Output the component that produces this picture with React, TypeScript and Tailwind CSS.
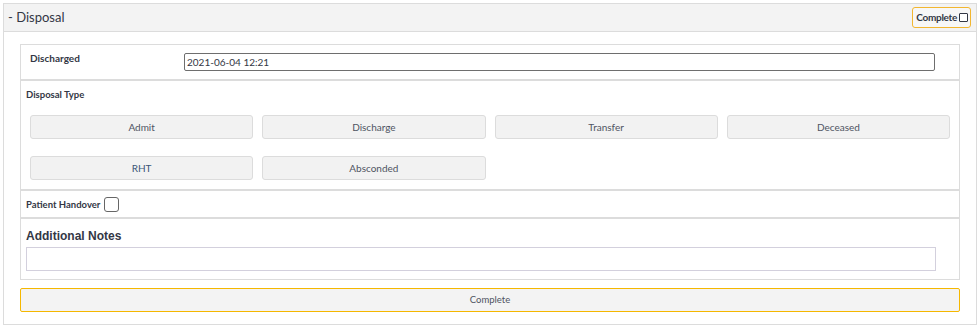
import { useState } from "react";

const font = { fontFamily: "Lato, 'Open Sans', sans-serif" };

const disposalTypes = ["Admit", "Discharge", "Transfer", "Deceased", "RHT", "Absconded"];

export default function App() {
  const [selected, setSelected] = useState<string | null>(null);
  const [handover, setHandover] = useState(false);
  const [done, setDone] = useState(false);

  return (
    <div className="w-[979px] h-[327px] bg-white pt-[3px] pl-[3px] pr-[2px]" style={font}>
      <div className="border border-[#dcdcdc] h-[322px] flex flex-col">
        {/* header */}
        <div className="h-[28px] bg-[#f3f3f3] border-b border-[#dcdcdc] flex items-center justify-between pl-[4px] pr-[5px]">
          <span className="text-[13px] text-[#333745]">- Disposal</span>
          <button
            onClick={() => setDone(!done)}
            className="h-[21px] pl-[3px] pr-[2px] flex items-center border border-[#f2b630] rounded-[3px] bg-[#f7f7f7] text-[10px] font-bold text-[#333745] tracking-[-0.3px]"
          >
            Complete
            <span className="w-[9px] h-[9px] border border-[#333745] rounded-[1px] ml-[2px] bg-white" />
          </button>
        </div>

        {/* body */}
        <div className="pt-[12px] pl-[16px] pr-[16px]">
          <div className="border border-[#dcdcdc]">
            <div className="h-[36px] flex items-start border-b-2 border-[#dcdcdc]">
              <span className="w-[163px] pl-[9px] pt-[6px] text-[10px] font-bold text-[#333745]">Discharged</span>
              <input
                defaultValue="2021-06-04 12:21"
                className="mt-[8px] w-[751px] h-[18px] border border-[#6e6e6e] rounded-[2px] px-[2px] text-[10px] text-[#333745] outline-none"
              />
            </div>

            <div className="border-b-2 border-[#dcdcdc] pl-[5px] pr-[9px] pt-[7px] pb-[9px]">
              <div className="text-[9.5px] font-bold text-[#333745]">Disposal Type</div>
              <div className="grid grid-cols-4 gap-x-[9px] gap-y-[17px] mt-[13px] pl-[4px]">
                {disposalTypes.map((t) => (
                  <button
                    key={t}
                    onClick={() => setSelected(t)}
                    className={`h-[24px] rounded-[3px] border border-[#dcdcdc] text-[10px] ${
                      selected === t ? "bg-[#e2e2e2]" : "bg-[#f2f2f2]"
                    } ${t === "RHT" ? "text-[#3b5577]" : "text-[#4f5462]"}`}
                  >
                    {t}
                  </button>
                ))}
              </div>
            </div>

            <div className="h-[28px] flex items-center gap-[4px] border-b-2 border-[#dcdcdc] pl-[5px] pt-[1px]">
              <span className="text-[9.5px] font-bold text-[#333745]">Patient Handover</span>
              <button
                onClick={() => setHandover(!handover)}
                className="w-[15px] h-[15px] border border-[#666] rounded-[3px] bg-white text-[9px] leading-none"
              >
                {handover ? "✓" : ""}
              </button>
            </div>

            <div className="pl-[5px] pr-[23px] pt-[8px] pb-[8px]">
              <div className="text-[12px] font-bold text-[#333745]" style={{ fontFamily: "'Liberation Sans', Arial, sans-serif" }}>
                Additional Notes
              </div>
              <textarea className="block w-full h-[24px] mt-[2px] border border-[#d3d0dd] resize-none outline-none text-[10px]" />
            </div>
          </div>

          <button className="mt-[8px] w-full h-[24px] bg-[#f3f3f3] border border-[#f5b700] rounded-[2px] text-[9.5px] text-[#4f5462]">
            Complete
          </button>
        </div>
      </div>
    </div>
  );
}
